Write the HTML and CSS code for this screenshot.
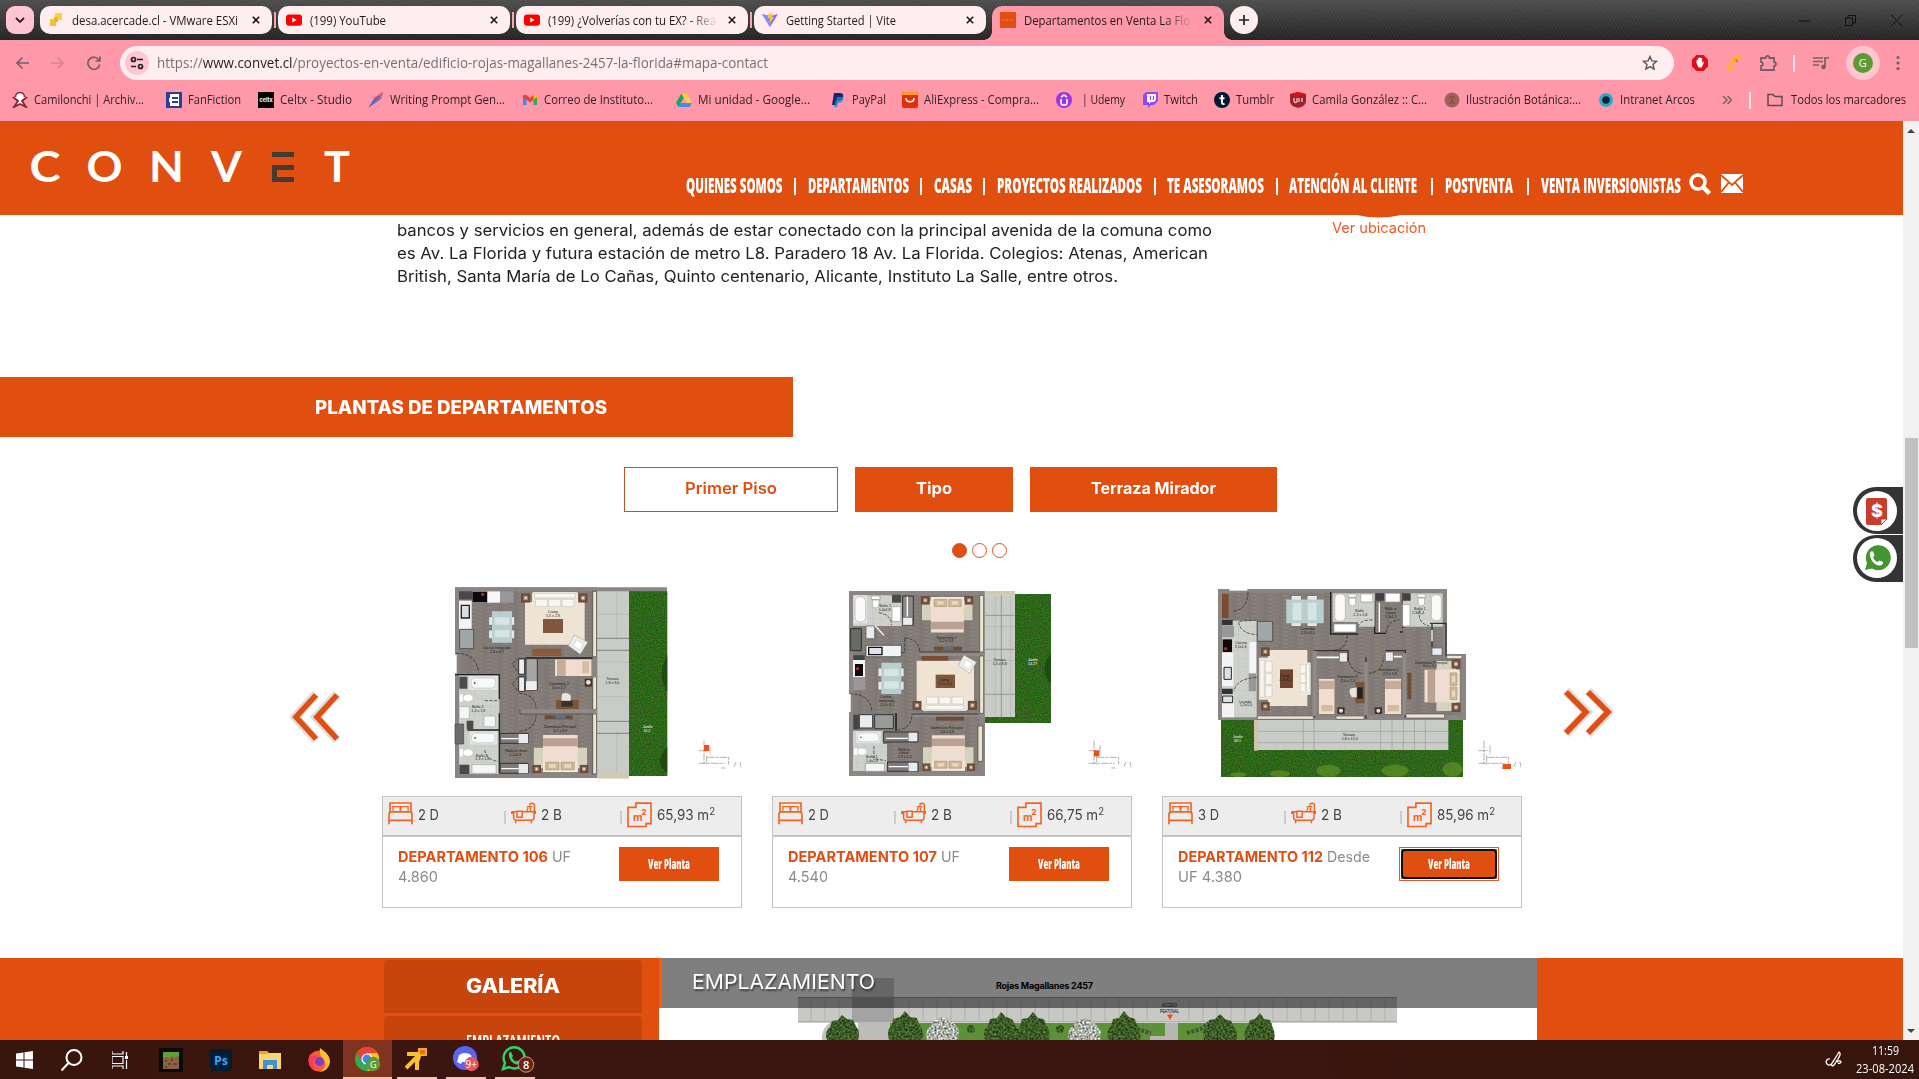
FILE: index.html
```html
<!DOCTYPE html>
<html lang="es">
<head>
<meta charset="utf-8">
<title>Departamentos en Venta La Florida</title>
<link rel="stylesheet" href="styles.css">
</head>
<body>
<svg class="defs" width="0" height="0">
  <defs>
    <filter id="grass" x="0" y="0" width="1" height="1" color-interpolation-filters="sRGB"><feTurbulence type="fractalNoise" baseFrequency=".28" numOctaves="2" seed="4"/><feColorMatrix values=".22 0 0 0 .07  0 .4 0 0 .2  0 0 .2 0 0  0 0 0 0 1"/><feComposite in2="SourceGraphic" operator="in"/></filter>
    <filter id="leaf" x="0" y="0" width="1" height="1" color-interpolation-filters="sRGB"><feTurbulence type="fractalNoise" baseFrequency=".45" numOctaves="2" seed="7"/><feColorMatrix values=".55 0 0 0 -.04  .6 0 0 0 .06  .4 0 0 0 -.05  0 0 0 0 1"/><feComposite in2="SourceGraphic" operator="in"/></filter>
    <filter id="bloom" x="0" y="0" width="1" height="1" color-interpolation-filters="sRGB"><feTurbulence type="fractalNoise" baseFrequency=".5" numOctaves="2" seed="9"/><feColorMatrix values="1.3 0 0 0 .02  1.3 0 0 0 .04  1.3 0 0 0 0  0 0 0 0 1"/><feComposite in2="SourceGraphic" operator="in"/></filter>
    <pattern id="wood" width="46" height="12" patternUnits="userSpaceOnUse"><rect width="46" height="12" fill="#847d78"/><path d="M0 3h30M16 9h30" stroke="#77706b" stroke-width="2"/><path d="M30 6h16M0 0h20" stroke="#928b85" stroke-width="2"/></pattern>
    <pattern id="tile" width="24" height="24" patternUnits="userSpaceOnUse"><rect width="24" height="24" fill="#cfd1cc"/><path d="M0 0h24M0 0v24" stroke="#bcbeb9" stroke-width="1.5"/></pattern>
    <symbol id="bed" viewBox="0 0 160 112"><path d="M0 12h160v62H0z" fill="#d4d2bd"/><path d="M28 0h104v112H28z" fill="#efddd1"/><path d="M28 0h104v32H28z" fill="#f3e6da"/><path d="M28 78h104v24H28z" fill="#bba191"/><path d="M38 8h40v22H38zM84 8h40v22H84z" fill="#cfb896" stroke="#a89272" stroke-width="2"/><path d="M48 14h20v10H48zM94 14h20v10H94z" fill="#e8d9c0"/></symbol>
    <symbol id="single" viewBox="0 0 110 50"><path d="M0 0h110v50H0z" fill="#f0ddd0"/><path d="M6 0h26v50H6z" fill="#c7ab99"/><path d="M82 6h20v36H82z" fill="#d3bd9c"/></symbol>
    <symbol id="sofa" viewBox="0 0 138 48"><rect width="138" height="48" rx="5" fill="#ece8de"/><path d="M8 4h122v14H8zM10 22h36v22H10zM50 22h36v22H50zM90 22h36v22H90z" fill="#f8f6ef" stroke="#cbc5b8" stroke-width="2"/></symbol>
    <symbol id="lamp" viewBox="0 0 30 30"><path d="M0 0h30v30H0z" fill="#6b4d3c"/><path d="M8 8h14v14H8z" fill="#b18b72"/><circle cx="15" cy="15" r="4" fill="#ead9c8"/></symbol>
    <symbol id="dining" viewBox="0 0 82 98"><path d="M2 18h20v26H2zM2 58h20v26H2zM60 18h20v26H60zM60 58h20v26H60z" fill="#e8e9e6" stroke="#656260" stroke-width="2"/><path d="M12 2h60v94H12z" fill="#b9cfce"/><path d="M20 20h44v22H20zM20 58h44v22H20z" fill="#d6e4e3"/></symbol>
    <symbol id="tub" viewBox="0 0 90 44"><rect width="90" height="44" fill="#e3e5e6"/><rect x="6" y="6" width="78" height="32" rx="12" fill="#f8f9f9" stroke="#b9bcbe" stroke-width="2"/><circle cx="18" cy="22" r="3" fill="#555"/></symbol>
    <symbol id="toilet" viewBox="0 0 42 28"><path d="M0 2h12v24H0z" fill="#fff" stroke="#aaa"/><ellipse cx="26" cy="14" rx="15" ry="11" fill="#fff" stroke="#aaa"/></symbol>
    <symbol id="chair" viewBox="0 0 62 62"><path d="M20 2L60 24 38 60 2 34z" fill="#efefec" stroke="#a9a7a3" stroke-width="2"/><path d="M26 16l22 12-12 20-20-14z" fill="#fff" stroke="#c4c2be" stroke-width="2"/></symbol>
    <symbol id="i-bed" viewBox="0 0 76 70"><g fill="none" stroke="#f26322" stroke-width="5"><path d="M6 32V3h64v29M3 68V38c0-6 3-8 7-8h56c4 0 7 2 7 8v30M3 56h70"/><path d="M15 27V14h22v13M39 27V14h22v13" stroke-width="4"/></g></symbol>
    <symbol id="i-bath" viewBox="0 0 76 66"><g fill="none" stroke="#f26322" stroke-width="4.500"><path d="M2 29h16M36 29h38v5h-4v13c0 6-4 8-8 8H16c-5 0-8-2-8-8V34H2v-5"/><path d="M18 28h16v18H18z"/><path d="M14 56v8M62 56v8M71 29V10c0-9-14-9-14 0"/><path d="M48 14h17M52 18l-4 9M59 18v9" stroke-width="4"/></g></symbol>
    <symbol id="i-m2" viewBox="0 0 76 78"><path d="M27 3h46v62H58v9H3V16h24z" fill="none" stroke="#f26322" stroke-width="5"/><text x="18" y="56" font-family="Inter,sans-serif" font-weight="700" font-size="32" fill="#f26322">m</text><text x="44" y="38" font-family="Inter,sans-serif" font-weight="800" font-size="24" fill="#f26322">2</text></symbol>
    <symbol id="map" viewBox="0 0 130 100"><path d="M18 12v70M36 26v28M26 56v28M2 42h28M2 80h78M28 62h64v22M70 94h12M108 90l6-14M126 76l4 18" stroke="#8c8c8c" stroke-width="2" fill="none" stroke-dasharray="22 3 9 3"/></symbol>
    <symbol id="close" viewBox="0 0 8 8"><path d="M.8.8l6.4 6.4M7.2.8L.8 7.2" stroke="#1c1416" stroke-width="1.6"/></symbol>
    <symbol id="yt" viewBox="0 0 16 16"><rect y="2.4" width="16" height="11.4" rx="3" fill="#f00"/><path d="M6.3 5.5v5l4.3-2.5z" fill="#fff"/></symbol>
  </defs>
</svg>

<div class="tabstrip">
  <div class="tab-search"><svg width="10" height="6" viewBox="0 0 10 6"><path d="M1 1l4 4 4-4" fill="none" stroke="#222" stroke-width="1.8"/></svg></div>
  <div class="tab"><svg width="16" height="16"><path d="M7 1h7v7H7z" fill="#fbd234"/><path d="M2 7h6v7H2z" fill="#f8c420"/><path d="M6 5h4v5H6z" fill="#f3b416"/></svg><span data-w="166">desa.acercade.cl - VMware ESXi</span><svg class="x" width="8" height="8"><use href="#close"/></svg></div>
  <div class="tab"><svg width="16" height="16"><use href="#yt"/></svg><span data-w="76">(199) YouTube</span><svg class="x" width="8" height="8"><use href="#close"/></svg></div>
  <div class="tab"><svg width="16" height="16"><use href="#yt"/></svg><span class="fade" data-w="168">(199) ¿Volverías con tu EX? - Rea</span><svg class="x" width="8" height="8"><use href="#close"/></svg></div>
  <div class="tab last"><svg width="16" height="16"><path d="M0 2l8 13L16 2 8 4z" fill="#8a6cf0"/><path d="M0 2l8 13 1-10z" fill="#7a94fa"/><path d="M6 2l5-1-1 4h2l-4 6V6H6z" fill="#ffc92e"/></svg><span data-w="110">Getting Started | Vite</span><svg class="x" width="8" height="8"><use href="#close"/></svg></div>
  <div class="tab active"><svg width="16" height="16"><path d="M0 0h16v16H0z" fill="#e04e10"/><path d="M2 8h12" stroke="#f4a27c" stroke-dasharray="1 1.6"/></svg><span class="fade" data-w="166">Departamentos en Venta La Flo</span><svg class="x" width="8" height="8"><use href="#close"/></svg></div>
  <div class="newtab"><svg width="10" height="10"><path d="M5 0v10M0 5h10" stroke="#222" stroke-width="1.7"/></svg></div>
  <div class="winbtns">
    <svg width="11" height="11"><path d="M0 6h11" stroke="#111"/></svg>
    <svg width="11" height="11"><path d="M.5 3h7v7.500h-7zM3 3V.5h7.500V8H8" fill="none" stroke="#111"/></svg>
    <svg width="11" height="11"><path d="M0 0l11 11M11 0L0 11" stroke="#111"/></svg>
  </div>
</div>

<div class="toolbar">
  <div class="navbtns">
    <svg width="14" height="14"><path d="M14 7H2M7.500 1.500L2 7l5.500 5.500" fill="none" stroke="#75606a" stroke-width="1.7"/></svg>
    <svg width="14" height="14"><path d="M0 7h12M6.500 1.500L12 7l-5.500 5.500" fill="none" stroke="#d28492" stroke-width="1.7"/></svg>
    <svg width="14" height="14"><path d="M12 4A6 6 0 1 0 12.800 8.500M13 .5V5H8.500" fill="none" stroke="#75606a" stroke-width="1.7"/></svg>
  </div>
  <div class="omnibox">
    <div class="site"><svg width="14" height="14"><g fill="none" stroke="#2a2024" stroke-width="1.7"><circle cx="3.500" cy="3.500" r="2"/><path d="M7 3.500h6M1 10.500h5"/><circle cx="10.500" cy="10.500" r="2"/></g></svg></div>
    <span class="url" data-w="611">https://<b>www.convet.cl</b>/proyectos-en-venta/edificio-rojas-magallanes-2457-la-florida#mapa-contact</span>
    <svg class="star" width="16" height="16"><path d="M8 1.500l1.900 4.400 4.700.4-3.600 3.100 1.100 4.700L8 11.600l-4.100 2.500L5 9.400 1.400 6.300l4.700-.4z" fill="none" stroke="#5d5358" stroke-width="1.400"/></svg>
  </div>
  <div class="exts">
    <svg width="18" height="18"><path d="M5.500 1h7L17 5.500v7L12.500 17h-7L1 12.500v-7z" fill="#e00e17"/><path d="M5.500 9V6h1.300V4h1.400V3.400h1.500V4h1.400v5l1-1.500 1 .6-2.300 5.400H7.500z" fill="#fff"/></svg>
    <svg width="18" height="18"><path d="M3 17V13l4-7V3l3-1h6v4h-3l-2 0-2 4-2 2v5z" fill="#fbb034"/><path d="M10 5l3 1-1 3z" fill="#c47b30"/></svg>
    <svg width="18" height="18"><path d="M2 4h4.500a2 2 0 1 1 4 0H15v4a2 2 0 1 1 0 4v4H2v-4a2 2 0 1 0 0-4z" fill="none" stroke="#75606a" stroke-width="1.800"/></svg>
    <i class="vsep"></i>
    <svg width="18" height="18"><path d="M1 4h10M1 7.500h10M1 11h6M13 13V4h4" fill="none" stroke="#75606a" stroke-width="1.700"/><circle cx="11.500" cy="13" r="2.300" fill="#75606a"/></svg>
    <div class="avatar"><span>G</span></div>
    <svg width="4" height="16"><g fill="#75606a"><circle cx="2" cy="2.500" r="1.600"/><circle cx="2" cy="8" r="1.600"/><circle cx="2" cy="13.500" r="1.600"/></g></svg>
  </div>
</div>

<div class="bookmarks">
  <div><svg width="16" height="16"><circle cx="8" cy="5" r="4.500" fill="#fff" stroke="#8d2230" stroke-width="1.500"/><path d="M1 5l5 4-4 6 6-3 6 3-4-6 5-4" fill="#fff" stroke="#8d2230" stroke-width="1.800"/></svg><span data-w="110">Camilonchi | Archiv...</span></div>
  <div><svg width="16" height="16"><path d="M0 0h16v16H0z" fill="#2c3e9c"/><path d="M4 2h9v12H4zM3 6h2v4H3z" fill="#fff"/><path d="M6 5h6v2H6zM6 9h6v2H6z" fill="#2c3e9c"/></svg><span data-w="53">FanFiction</span></div>
  <div><svg width="16" height="16"><path d="M0 0h16v16H0z"/><text x="1.500" y="10" font-family="Inter,sans-serif" font-size="5.500" font-weight="700" fill="#fff">celtx</text></svg><span data-w="72">Celtx - Studio</span></div>
  <div><svg width="16" height="16"><path d="M1 15L6 6l9-6-2 7-7 5z" fill="#4f7fd0"/><path d="M6 6l9-6-3 6-5 3z" fill="#e8505f"/><path d="M1 15L11 4" stroke="#6b3fa0"/></svg><span data-w="115">Writing Prompt Gen...</span></div>
  <div><svg width="16" height="16"><path d="M1 3h3.500v10H1z" fill="#4285f4"/><path d="M11.500 3H15v10h-3.500z" fill="#34a853"/><path d="M1 3l3.500 0L8 6l3.500-3H15v2L8 10.500 1 5z" fill="#ea4335"/><path d="M11.500 3H15v2.500l-3.500 2z" fill="#fbbc04"/></svg><span data-w="109">Correo de Instituto...</span></div>
  <div><svg width="16" height="16"><path d="M5.500 1.500L0 11l2.500 4L8 5.500z" fill="#1ea362"/><path d="M5.500 1.500h5L16 11h-5z" fill="#ffcf48"/><path d="M5 11h11l-2.500 4h-11z" fill="#4688f4"/></svg><span data-w="112">Mi unidad - Google...</span></div>
  <div><svg width="16" height="16"><path d="M4 1h6c4 0 4 4 2 6s-4 2-5 2l-1 4H2z" fill="#14296b"/><path d="M7 5h6c1 3-1 6-5 6l-1 4H4z" fill="#1b83d0" opacity=".8"/></svg><span class="pp" data-w="34">PayPal</span></div>
  <div><svg width="16" height="16"><rect width="16" height="16" rx="2" fill="#e62e04"/><path d="M0 3V2a2 2 0 0 1 2-2h12a2 2 0 0 1 2 2v1z" fill="#ff9a1c"/><path d="M4 6c0 5 8 5 8 0" fill="none" stroke="#fff" stroke-width="1.600"/></svg><span data-w="115">AliExpress - Compra...</span></div>
  <div><svg width="16" height="16"><circle cx="8" cy="8" r="8" fill="#9a35e8"/><path d="M5 7v4c0 3 6 3 6 0V7M5 5l3-2 3 2" fill="none" stroke="#fff" stroke-width="1.600"/></svg><span class="ud" data-w="43">| Udemy</span></div>
  <div><svg width="16" height="16"><path d="M1 3l3-3h12v9l-4 4H9l-3 3v-3H1z" fill="#9146ff"/><path d="M5 2h9v6l-2 2H9l-2 2v-2H5z" fill="#fff"/><path d="M8.500 4v4M11.500 4v4" stroke="#9146ff" stroke-width="1.300"/></svg><span data-w="34">Twitch</span></div>
  <div><svg width="16" height="16"><circle cx="8" cy="8" r="8" fill="#001935"/><path d="M8 3v7.500c0 1.500 1 1.800 2.500 1.300M5.500 6.200h5" fill="none" stroke="#fff" stroke-width="2"/></svg><span data-w="38">Tumblr</span></div>
  <div><svg width="16" height="16"><path d="M0 2l8-2 8 2v7c0 4-4 6-8 7-4-1-8-3-8-7z" fill="#9c2230"/><path d="M4 6v3c0 2 3 2 3 0V6M9 6v4M12 6v4" stroke="#f2c6c8" fill="none" stroke-width="1.300"/><path d="M1 2l7-2 7 2-7 3z" fill="#e01010"/></svg><span data-w="115">Camila González :: C...</span></div>
  <div><svg width="16" height="16"><circle cx="8" cy="8" r="7.500" fill="#a3605a"/><path d="M5 6c1-2 5-2 6 0M8 6v4M5 11h6" stroke="#7f4440" fill="none"/></svg><span data-w="115">Ilustración Botánica:...</span></div>
  <div><svg width="16" height="16"><circle cx="8" cy="8" r="7" fill="#2fa9c9"/><circle cx="8" cy="8" r="3.800" fill="#0d2232"/></svg><span data-w="75">Intranet Arcos</span></div>
  <svg class="more" width="10" height="8"><path d="M1 0l4 4-4 4M5.500 0l4 4-4 4" fill="none" stroke="#75606a" stroke-width="1.500"/></svg>
  <i class="vsep"></i>
  <div><svg width="16" height="16"><path d="M1 2.500h5l2 2h7v9H1z" fill="none" stroke="#5c4a50" stroke-width="1.500"/></svg><span class="all" data-w="115">Todos los marcadores</span></div>
</div>

<div class="viewport">
  <main class="page">
    <header class="site-header">
      <svg class="logo" width="330" height="56" viewBox="27 139 330 56" font-family="Lato,sans-serif" font-size="42" font-weight="700" fill="#fff">
        <text x="28.500" y="182" textLength="31" lengthAdjust="spacingAndGlyphs">C</text><text x="85.500" y="182" textLength="36" lengthAdjust="spacingAndGlyphs">O</text><text x="148" y="182" textLength="35" lengthAdjust="spacingAndGlyphs">N</text><text x="210" y="182" textLength="31" lengthAdjust="spacingAndGlyphs">V</text>
        <g fill="#463a34"><rect x="271" y="152" width="22" height="5"/><path d="M271 165h22v5h-17v7h17v5h-22z"/></g>
        <text x="323" y="182" textLength="26" lengthAdjust="spacingAndGlyphs">T</text>
      </svg>
      <nav>
        <a data-w="96.5">QUIENES SOMOS</a><i></i><a data-w="101">DEPARTAMENTOS</a><i></i><a data-w="38">CASAS</a><i></i><a data-w="145">PROYECTOS REALIZADOS</a><i></i><a data-w="97">TE ASESORAMOS</a><i></i><a data-w="128">ATENCIÓN AL CLIENTE</a><i class="wide"></i><a data-w="68">POSTVENTA</a><i class="wide"></i><a data-w="140">VENTA INVERSIONISTAS</a>
        <svg class="lens" width="22" height="22"><circle cx="9" cy="9" r="7" fill="none" stroke="#fff" stroke-width="3.500"/><path d="M14 14l6.500 6.500" stroke="#fff" stroke-width="4.500"/></svg>
        <svg class="mail" width="22" height="19"><path d="M0 0h22v19H0z" fill="#fff"/><path d="M0 1l11 10L22 1M0 18l7.500-9M22 18l-7.500-9" fill="none" stroke="#e04e10" stroke-width="1.800"/></svg>
      </nav>
    </header>

    <section class="intro">
      <p><span data-w="815">bancos y servicios en general, además de estar conectado con la principal avenida de la comuna como</span><span data-w="811">es Av. La Florida y futura estación de metro L8. Paradero 18 Av. La Florida. Colegios: Atenas, American</span><span data-w="721">British, Santa María de Lo Cañas, Quinto centenario, Alicante, Instituto La Salle, entre otros.</span></p>
      <div class="where"><svg width="44" height="3"><path d="M0 0q22 5 44 0z" fill="#e04e10"/></svg><a data-w="94">Ver ubicación</a></div>
    </section>

    <h2 class="banner"><span data-w="292">PLANTAS DE DEPARTAMENTOS</span></h2>

    <div class="floors">
      <a class="on"><span data-w="92">Primer Piso</span></a><a class="f2"><span data-w="36">Tipo</span></a><a class="f3"><span data-w="125">Terraza Mirador</span></a>
    </div>
    <div class="dots"><i class="on"></i><i></i><i></i></div>

    <div class="carousel">
      <svg class="prev" width="50" height="52"><g fill="none" stroke="#ddd" stroke-width="9"><path d="M26 3L5 26l21 23M47 3L26 26l21 23"/></g><g fill="none" stroke="#e04e10" stroke-width="5.500"><path d="M26 4L6 26l20 22M47 4L27 26l20 22"/></g></svg>

      <article class="card">
        <svg class="plan" width="360" height="210" viewBox="36 30 1080 630">
          <path d="M255 52h636v14H255z" fill="#8b8583"/><path d="M255 52h426v572H255z" fill="#8b8583"/>
          <path d="M267 64h403v546H267z" fill="url(#wood)"/>
          <path d="M681 64h96v548h-96z" fill="#c9cbc7"/><path d="M681 612h96v14h-96z" fill="#cfcbb2"/>
          <path d="M681 133h96M681 205h96M681 241h96M681 454h96M681 490h96M740 64v140M740 490v120M681 276h96M681 380h96" stroke="#b4b6b2" stroke-width="2"/>
          <path d="M681 205h96M681 241h96M681 454h96M681 490h96" stroke="#666" stroke-width="2"/>
          <path d="M777 64h115v554H777z" filter="url(#grass)"/><path d="M892 255v110q-34-50 0-110zM892 530v80q-44-35 0-80z" fill="#123a0a" opacity=".6"/>
          <path d="M267 64h40v24h-40z" fill="#4a484a"/><path d="M308 66h44v30h-44z" fill="#0c0a0c"/><path d="M352 64h38v34h-38z" fill="#f7f7f8"/><path d="M390 64h40v34h-40z" fill="#98989b"/><circle cx="338" cy="73" r="5" fill="#c22"/>
          <path d="M267 92h38v86h-38z" fill="#f4f4f5"/><path d="M274 106h24v38h-24z" fill="#ddd" stroke="#222" stroke-width="4"/><path d="M269 178h42v58h-42z" fill="#a0a5a5" stroke="#555" stroke-width="3"/>
          <use href="#dining" x="354" y="122" width="82" height="98"/>
          <path d="M465 96h179v128H465z" fill="#efe3d3"/><use href="#sofa" x="486" y="66" width="138" height="48"/><path d="M519 147h60v42h-60z" fill="#80563d"/><use href="#lamp" x="453" y="70" width="28" height="28"/><use href="#lamp" x="625" y="70" width="28" height="28"/><use href="#chair" x="593" y="193" width="62" height="62"/><path d="M487 236h87v22h-87z" fill="#8c5b3a"/>
          <path d="M668 64h12v196h-12zM668 320h12v98h-12zM668 432h12v180h-12z" fill="#ece5d2" stroke="#333" stroke-width="2"/><path d="M666 260h16v62h-16z" fill="#8b8583"/>
          <path d="M466 264h202" stroke="#222" stroke-width="4"/><path d="M446 266h18v48h-18zM446 320h18v44h-18zM468 266h34v94h-34z" fill="#a9a5a3" stroke="#333" stroke-width="3"/><path d="M468 334h32v26h-32zM448 270h14v40h-14zM448 324h14v38h-14z" fill="#eceef0"/>
          <use href="#single" x="555" y="268" width="110" height="50"/><path d="M644 326h22v24h-22z" fill="#4c342d"/><circle cx="655" cy="337" r="7" fill="#f4dada"/>
          <path d="M558 390h68v28h-68z" fill="#7a5638"/><path d="M574 392h34v18h-34z" fill="#333"/><path d="M576 372q14-8 26 4v16h-28z" fill="#e8e5dd"/>
          <path d="M450 418h232v14H450z" fill="#908a89"/><path d="M450 418v14M450 432h220" stroke="#444" stroke-width="2"/><path d="M524 436h84v12h-84z" fill="#6e4d38"/><path d="M556 434h30v12h-30z" fill="#5b7180"/>
          <path d="M267 316h121v295H267z" fill="url(#tile)"/><path d="M255 314h133v74M388 430v50H292M388 480v130" fill="none" stroke="#222" stroke-width="4"/>
          <path d="M268 320h24v36h-24zM268 584h30v28h-30zM290 452h20v26h-20z" fill="#4a4a4c"/><use href="#tub" x="296" y="318" width="88" height="42"/><use href="#tub" x="296" y="484" width="88" height="40"/><use href="#toilet" x="268" y="370" width="42" height="28"/><use href="#toilet" x="268" y="534" width="42" height="28"/><path d="M268 410h30v36h-30zM342 438h34v32h-34zM306 584h72v26h-72z" fill="#f5f6f6" stroke="#aaa" stroke-width="2"/><path d="M255 462h26v60h-26z" fill="#6c6c6b" stroke="#444" stroke-width="2"/>
          <path d="M390 490h84v30h-84zM390 580h84v30h-84z" fill="#7f7977" stroke="#333" stroke-width="3"/><path d="M394 506h52M394 596h52" stroke="#fff" stroke-width="4"/><path d="M446 492h28v28h-28zM446 582h28v28h-28z" fill="#e8ebed"/>
          <use href="#bed" x="491" y="495" width="160" height="112" transform="rotate(180 571 551)"/><use href="#lamp" x="486" y="584" width="28" height="26"/><use href="#lamp" x="628" y="584" width="28" height="26"/>
          <path d="M258 250q60-2 68 58M448 370q50 4 50 46M448 484q50-6 50-50M344 392h40M344 540q6 30 40 34M428 280l16-14M428 284l16 22M428 340l16-18M428 342l16 22" fill="none" stroke="#222" stroke-width="2" stroke-dasharray="10 4"/><path d="M250 254h10v56h-10z" fill="#fff"/>
          <g class="lbl"><text x="535" y="129">Living</text><text x="528" y="140">5,5 x 2,8</text><text x="338" y="238">Cocina Integrada</text><text x="360" y="249">2,4 x 4,7</text><text x="537" y="345">Dormitorio 2</text><text x="545" y="356">3,0 x 2,7</text><text x="522" y="474">Dormitorio Principal</text><text x="550" y="486">3,7 x 3,6</text><text x="306" y="414">Baño 2</text><text x="304" y="425">1,4 x 1,8</text><text x="405" y="547">Walk in closet</text><text x="418" y="558">2,1x1,8</text><text x="318" y="560">Baño 1</text><text x="316" y="571">1,4 x 1,8</text><text x="709" y="330">Terraza</text><text x="706" y="341">1,8 x 9,0</text><g fill="#fff"><text x="818" y="474">Jardín</text><text x="820" y="485">16,2</text></g></g>
          <use href="#map" x="984" y="500" width="130" height="100"/><path d="M1002 525h15v18h-15z" fill="#f04e16"/>
        </svg>
        <div class="specs"><svg width="25" height="23"><use href="#i-bed"/></svg><span data-w="21">2 D</span><i></i><svg class="bath" width="25" height="22"><use href="#i-bath"/></svg><span data-w="21">2 B</span><i></i><svg width="25" height="26"><use href="#i-m2"/></svg><span data-w="58">65,93 m<sup>2</sup></span></div>
        <div class="info"><p><b data-w="150">DEPARTAMENTO 106</b> <span data-w="19">UF</span><br><span data-w="40">4.860</span></p><a class="btn"><span data-w="42">Ver Planta</span></a></div>
      </article>

      <article class="card">
        <svg class="plan" width="360" height="210" viewBox="36 30 1080 630">
          <path d="M764 72h109v387H674v-20h90z" filter="url(#grass)"/><path d="M873 250v90q-40-40 0-90z" fill="#123a0a" opacity=".6"/>
          <path d="M267 63h408v555H267z" fill="#8b8583"/><path d="M279 76h380v528H279z" fill="url(#wood)"/>
          <path d="M674 76h91v365h-91z" fill="#c9cbc7"/><path d="M674 63h91v13h-91z" fill="#cfcbb2"/><path d="M706 76v365M724 76v365M674 136h90M674 170h90M674 238h90M674 272h90M674 373h90M752 76v365" stroke="#b2b4b0" stroke-width="2"/><path d="M674 136h90M674 238h90M674 373h90M724 76v365" stroke="#777" stroke-width="1.500"/>
          <path d="M279 76h146v92H279z" fill="url(#tile)"/><rect x="281" y="76" width="40" height="84" fill="#e4e6e6"/><rect x="285" y="80" width="32" height="76" rx="14" fill="#fafafa" stroke="#aaa" stroke-width="2"/><path d="M334 78h26v10h-26zM337 90h20v18q-10 12-20 0zM396 110h26v44h-26z" fill="#fff" stroke="#999" stroke-width="2"/><path d="M396 74h28v24h-28z" fill="#4a4a4c"/>
          <path d="M428 78h32v88h-32z" fill="#8e8986" stroke="#333" stroke-width="3"/><path d="M442 80v60" stroke="#fff" stroke-width="4"/><path d="M428 142h30v24h-30zM318 168h26v38h-26z" fill="#e9ebed" stroke="#555" stroke-width="2"/><path d="M272 176h32v66h-32z" fill="#686a68" stroke="#333" stroke-width="3"/>
          <use href="#bed" x="486" y="78" width="152" height="112"/><use href="#lamp" x="482" y="78" width="28" height="26"/><use href="#lamp" x="613" y="78" width="28" height="26"/><path d="M522 230h84v12h-84z" fill="#6e4d38"/><path d="M550 230h30v10h-30z" fill="#5b7180"/>
          <path d="M478 244h197v14H478zM456 428h218v12H456z" fill="#908a89"/><path d="M456 432h200M478 246h180" stroke="#333" stroke-width="3"/>
          <path d="M318 226h106v34H318z" fill="#f2f3f6" stroke="#333" stroke-width="2"/><path d="M326 232h40v22h-40z" fill="#dfe2e8" stroke="#111" stroke-width="4"/><path d="M280 256h34v14h-34zM280 434h16v44h-16zM279 580h34v24h-34z" fill="#434244"/><path d="M279 270h36v52h-36z" fill="#f4f4f5"/><path d="M285 282h24v36h-24z" fill="#0c0a0c"/><circle cx="293" cy="296" r="5" fill="#c22"/><path d="M280 322h36v38h-36z" fill="#98989b"/>
          <use href="#dining" x="352" y="276" width="82" height="98"/><path d="M470 272h172v148H470z" fill="#efe3d3"/><path d="M485 258h80v14h-80z" fill="#7a4d31"/><path d="M527 314h58v40h-58z" fill="#80563d"/><use href="#chair" x="591" y="254" width="62" height="58"/><use href="#sofa" x="487" y="377" width="134" height="46" transform="rotate(180 554 400)"/><use href="#lamp" x="457" y="392" width="28" height="28"/><use href="#lamp" x="623" y="392" width="28" height="28"/>
          <path d="M659 76h12v170h-12zM659 258h12v172h-12zM654 468h14v106h-14z" fill="#ece5d2" stroke="#444" stroke-width="2"/>
          <path d="M298 434h40v40h-40z" fill="#e9ebed" stroke="#333" stroke-width="3"/><path d="M344 434h56v42h-56z" fill="#979c9b" stroke="#333" stroke-width="3"/><path d="M408 430v52" stroke="#222" stroke-width="5"/>
          <path d="M279 482h90v40h12v82H279z" fill="url(#tile)"/><use href="#tub" x="281" y="484" width="88" height="36"/><use href="#toilet" x="281" y="532" width="40" height="26"/><path d="M316 580h58v24h-58z" fill="#f5f6f6" stroke="#888" stroke-width="2"/><path d="M370 486h104v30H370zM382 576h92v28h-92z" fill="#7f7977" stroke="#333" stroke-width="3"/><path d="M378 505h66M386 590h58" stroke="#fff" stroke-width="4"/><path d="M446 488h26v26h-26zM446 578h26v26h-26z" fill="#e8ebed"/>
          <path d="M528 440h84v12h-84z" fill="#6e4d38"/><use href="#bed" x="489" y="494" width="152" height="110" transform="rotate(180 565 549)"/><use href="#lamp" x="485" y="580" width="28" height="24"/><use href="#lamp" x="619" y="580" width="28" height="24"/>
          <path d="M268 372q62-2 68 52M434 204q46 4 44 44M412 480q44-4 44-48M424 248h10v-44M356 128q40 6 38 38M342 528v38l36 6" fill="none" stroke="#222" stroke-width="2" stroke-dasharray="10 4"/><path d="M346 168l26 28" stroke="#fff" stroke-width="4"/><path d="M262 372h10v54h-10z" fill="#fff"/>
          <g class="lbl"><text x="530" y="206">Dormitorio 2</text><text x="538" y="217">3,2 x 1,4</text><text x="360" y="385">Cocina</text><text x="357" y="396">Integrada</text><text x="360" y="407">2,0 x 4,2</text><text x="538" y="333">Living</text><text x="535" y="345">3,2 x 2,6</text><text x="512" y="476">Dormitorio Principal</text><text x="540" y="488">3,0 x 2,9</text><text x="414" y="542">Walk in</text><text x="417" y="553">closet</text><text x="413" y="565">1,3 x 1,5</text><text x="358" y="112">Baño 2</text><text x="356" y="123">1,4x1,8</text><text x="318" y="564">Baño 1</text><text x="318" y="575">1,4x1,8</text><text x="700" y="272">Terraza</text><text x="698" y="284">1,5 x 8,8</text><g fill="#fff"><text x="803" y="272">Jardín</text><text x="804" y="284">14,27</text></g></g>
          <use href="#map" x="984" y="500" width="130" height="100"/><path d="M1002 541h16v18h-16z" fill="#f04e16"/>
        </svg>
        <div class="specs"><svg width="25" height="23"><use href="#i-bed"/></svg><span data-w="21">2 D</span><i></i><svg class="bath" width="25" height="22"><use href="#i-bath"/></svg><span data-w="21">2 B</span><i></i><svg width="25" height="26"><use href="#i-m2"/></svg><span data-w="57">66,75 m<sup>2</sup></span></div>
        <div class="info"><p><b data-w="149">DEPARTAMENTO 107</b> <span data-w="19">UF</span><br><span data-w="40">4.540</span></p><a class="btn"><span data-w="42">Ver Planta</span></a></div>
      </article>

      <article class="card">
        <svg class="plan" width="360" height="210" viewBox="36 30 1080 630">
          <path d="M213 448h726v173H213z" filter="url(#grass)"/><g fill="#6f9e2c" opacity=".55"><ellipse cx="390" cy="611" rx="30" ry="10"/><ellipse cx="535" cy="602" rx="36" ry="18"/><ellipse cx="735" cy="602" rx="40" ry="18"/><ellipse cx="908" cy="598" rx="30" ry="22"/><ellipse cx="265" cy="614" rx="24" ry="7"/></g>
          <path d="M204 57h687v195h57v198H204z" fill="#8b8583"/><path d="M216 68h662v196h56v172H216z" fill="url(#wood)"/>
          <path d="M312 450h583v90H312z" fill="#c9cbc7"/><path d="M322 484h573M322 518h573M492 450v90M692 450v90M726 450v90M760 450v90M793 450v90M826 450v90M460 450v90" stroke="#8a8a88" stroke-width="1.500"/><path d="M312 450h12v92h-12z" fill="#d0c4a2"/>
          <path d="M216 152h104v290H216z" fill="url(#tile)"/><path d="M216 72h20v72h-20z" fill="#7a4d31"/><path d="M216 150h32v16h-32zM216 356h32v16h-32z" fill="#333"/><path d="M216 168h36v34h-36zM296 310h22v54h-22z" fill="#98989b"/><path d="M218 208h28v38h-28z" fill="#0c0a0c"/><circle cx="227" cy="236" r="5" fill="#c22"/><path d="M216 248h34v100h-34zM216 376h36v66h-36zM298 216h20v94h-20z" fill="#f4f4f6"/><path d="M222 292h22v36h-22zM218 378h30v20h-30z" fill="#dde1e6" stroke="#222" stroke-width="3"/><path d="M322 154h46v60h-46z" fill="#a0a8a7" stroke="#555" stroke-width="3"/>
          <use href="#dining" x="416" y="64" width="98" height="118" transform="rotate(90 465 123)"/>
          <path d="M354 240h118v168H354z" fill="#efe3d3"/><use href="#sofa" x="284" y="304" width="128" height="44" transform="rotate(-90 348 326)"/><use href="#sofa" x="416" y="304" width="98" height="44" transform="rotate(90 465 326)"/><path d="M390 298h39v56h-39z" fill="#6e4530"/><use href="#lamp" x="332" y="232" width="28" height="26"/><use href="#lamp" x="332" y="396" width="28" height="26"/>
          <path d="M542 66v126h82M674 92v98h34M758 68v106M758 186h-8" stroke="#222" stroke-width="4" fill="none"/><path d="M548 70h126v100h-50v-14h-76zM758 70h120v100H758z" fill="url(#tile)"/><rect x="554" y="72" width="32" height="82" rx="12" fill="#fafafa" stroke="#aaa" stroke-width="2"/><rect x="844" y="74" width="30" height="78" rx="12" fill="#fafafa" stroke="#aaa" stroke-width="2"/><path d="M595 72h24v10h-24zM597 84h20v18q-10 12-20 0zM802 72h24v10h-24zM804 84h20v18q-10 12-20 0zM632 72h36v24h-36zM758 104h22v64h-22zM552 162h66v24h-66zM706 70h44v26h-44z" fill="#fff" stroke="#999" stroke-width="2"/><path d="M676 70h26v22h-26zM758 70h24v22h-24z" fill="#403f41"/><path d="M688 98v88" stroke="#fff" stroke-width="4"/>
          <path d="M490 242h104v34M494 242v200M648 262v184M706 242h60v200M840 160h48v100M846 160v72" fill="none" stroke="#333" stroke-width="4"/><path d="M488 242h12v196h-12zM643 276h10v160h-10zM758 250h10v186h-10z" fill="#918b88"/><path d="M500 262h68M714 260h42" stroke="#fff" stroke-width="5"/><path d="M568 248h24v28h-24zM706 246h24v28h-24zM846 234h30v22h-30z" fill="#e8ebed" stroke="#555" stroke-width="2"/><path d="M846 180v34" stroke="#fff" stroke-width="4"/>
          <use href="#single" x="477" y="355" width="106" height="48" transform="rotate(90 530 379)"/><use href="#single" x="676" y="355" width="106" height="48" transform="rotate(90 729 379)"/><path d="M562 412h22v20h-22zM674 412h22v20h-22z" fill="#44302b"/><circle cx="573" cy="422" r="6" fill="#f4dada"/><circle cx="685" cy="422" r="6" fill="#f4dada"/><path d="M616 336h28v64h-28z" fill="#7a5638"/><path d="M622 352h16v34h-16z" fill="#222"/><path d="M600 356q-4 14 6 26h14v-30z" fill="#e8e5dd"/>
          <use href="#bed" x="801" y="292" width="150" height="112" transform="rotate(90 876 348)"/><use href="#lamp" x="904" y="268" width="28" height="28"/><use href="#lamp" x="904" y="398" width="28" height="28"/><path d="M772 308h12v80h-12z" fill="#6e4d38"/>
          <path d="M322 438h168v10H322zM558 438h84v10h-84zM768 432h116v12H768zM890 256h46v10h-46z" fill="#ece5d2" stroke="#555" stroke-width="2"/>
          <path d="M294 66q-2 54-46 58M320 150l-54 4q2 36 54 40M592 196q-4 46-44 44M594 262q8 46 46 48M656 310q44-4 44-48M708 188q4-36 40-38M320 322q-62 4-68 42M808 120q-6 40 30 48M624 170q8-22 44-20" fill="none" stroke="#222" stroke-width="2" stroke-dasharray="10 4"/><path d="M238 52h54v10h-54z" fill="#fff"/>
          <g class="lbl"><text x="450" y="180">Comedor</text><text x="452" y="192">2,3 x 3,5</text><text x="616" y="126">Baño</text><text x="610" y="137">2,3 x 1,8</text><text x="704" y="120">Walk in</text><text x="708" y="131">closet</text><text x="704" y="143">1,3x1,5</text><text x="792" y="120">Baño 1</text><text x="786" y="132">2,3x1,4</text><text x="256" y="222">Cocina</text><text x="254" y="233">3,1x1,6</text><text x="390" y="322">Living</text><text x="388" y="334">4,7x3,2</text><text x="562" y="323">Dormitorio 3</text><text x="572" y="335">2,4 x 2,3</text><text x="686" y="303">Dormitorio 2</text><text x="698" y="314">2,7 x 1,8</text><text x="796" y="281">Dormitorio Principal</text><text x="818" y="292">3,0 x 3,0</text><text x="268" y="398">Lavado</text><text x="270" y="409">1,2x1,0</text><text x="578" y="497">Terraza</text><text x="575" y="509">1,8 x 12,0</text><g fill="#fff"><text x="248" y="505">Jardín</text><text x="252" y="516">49,1</text></g></g>
          <use href="#map" x="984" y="500" width="130" height="100"/><path d="M1058 582h25v15h-25z" fill="#f04e16"/>
        </svg>
        <div class="specs"><svg width="25" height="23"><use href="#i-bed"/></svg><span data-w="21">3 D</span><i></i><svg class="bath" width="25" height="22"><use href="#i-bath"/></svg><span data-w="21">2 B</span><i></i><svg width="25" height="26"><use href="#i-m2"/></svg><span data-w="58">85,96 m<sup>2</sup></span></div>
        <div class="info"><p><b data-w="145">DEPARTAMENTO 112</b> <span data-w="43">Desde</span><br><span data-w="64">UF 4.380</span></p><a class="btn focus"><span data-w="42">Ver Planta</span></a></div>
      </article>

      <svg class="next" width="50" height="52"><g fill="none" stroke="#ddd" stroke-width="9"><path d="M3 4l21 21L3 47M25 4l21 21-21 22"/></g><g fill="none" stroke="#e04e10" stroke-width="5.500"><path d="M3 5l20 20L3 46M25 5l20 20-20 21"/></g></svg>
    </div>

    <section class="gallery">
      <div class="menu"><h3><span data-w="94">GALERÍA</span></h3><a><span data-w="94">EMPLAZAMIENTO</span></a></div>
      <div class="stage">
        <svg width="878" height="82">
          <path d="M139 39.500h599V64H139z" fill="#c8c8c5"/><path d="M139 39.500h599M139 64h599" stroke="#9b9b99"/>
          <path d="M152 40v24M166 40v24M180 40v24M250 40v24M264 40v24M278 40v24M292 40v24M306 40v24M320 40v24M334 40v24M348 40v24M362 40v24M376 40v24M390 40v24M404 40v24M418 40v24M432 40v24M446 40v24M460 40v24M474 40v24M488 40v24M530 40v24M544 40v24M558 40v24M572 40v24M586 40v24M600 40v24M614 40v24M628 40v24M642 40v24M656 40v24M670 40v24M684 40v24M698 40v24M712 40v24M726 40v24" stroke="#b0b0ae"/>
          <path d="M193 20h42v44h-42z" fill="#cdcdcd"/><path d="M193 39h42v25h-42z" fill="#a3a3a3"/><path d="M199 64h32v18h-32z" fill="#bcbcba"/>
          <path d="M231 65h382v17H231z" fill="#5d9138"/><path d="M506 65h13v17h-28v-4h15z" fill="#b5b5b2"/><path d="M478 71l14 4M528 75l14-4 8-6" stroke="#45503c" stroke-width="4" stroke-dasharray="3 1.500" fill="none"/>
          <path d="M176 62q-14 6-13 20h12z" fill="#999" opacity=".6"/>
          <g filter="url(#leaf)"><path d="M168 82q-3-8 3-13l2-6 6-1 4-5 5 4 6 1 3 6q5 6 2 14zM230 82q-3-10 3-15l1-6 7-2 5-6 5 6 7 1 2 6q6 7 3 16zM326 82q-3-10 3-14l2-7 7-1 4-6 5 5 6 2 3 6q5 6 2 15zM358 82q-2-9 3-14l2-7 6-1 5-6 5 6 6 1 2 6q5 6 3 15zM449 82q-2-10 3-14l2-7 6-1 5-7 5 6 6 2 2 6q5 6 3 15zM545 82q-3-9 3-13l2-7 6-1 5-5 5 5 6 2 3 6q5 6 2 13zM586 82q-2-9 3-14l2-6 5-1 5-6 4 6 6 1 2 6q4 6 2 14z"/><circle cx="312" cy="71" r="4"/><circle cx="401" cy="71" r="4"/></g>
          <path d="M268 82q-3-8 3-13l4-6 7-4 7 2 6 4 5 7-1 10zM410 82q-3-8 3-13l4-5 7-4 7 2 6 4 5 7-1 9z" filter="url(#bloom)"/>
          <text x="503" y="49" class="gate" textLength="15" lengthAdjust="spacingAndGlyphs">ACCESO</text><text x="501" y="55" class="gate" textLength="19" lengthAdjust="spacingAndGlyphs">PEATONAL</text><path d="M508 56.500h6l-3 5.500z" fill="#f04e16"/>
          <text x="337" y="30.500" font-family="Inter,sans-serif" font-weight="700" font-size="9" textLength="97">Rojas Magallanes 2457</text>
        </svg>
        <div class="caption"><span data-w="183">EMPLAZAMIENTO</span></div>
      </div>
    </section>

    <div class="floaters">
      <a><svg width="40" height="40"><circle cx="20" cy="20" r="20" fill="#fff"/><path d="M11 7h17q2 0 2 2v19l-6 6H11q-2 0-2-2V9q0-2 2-2z" fill="#c93d2c"/><path d="M24 34v-6h6z" fill="#fff" stroke="#c93d2c"/><text x="14" y="26" font-family="Inter,sans-serif" font-weight="800" font-size="18" fill="#fff">$</text></svg></a>
      <a><svg width="40" height="40"><circle cx="20" cy="20" r="20" fill="#fff"/><path d="M8 32l2-7A12.500 12.500 0 1 1 15 30.500z" fill="#43952f"/><path d="M13 15c1-2.500 3-2 3.500-.5l1 3-1.500 2c1 2.500 2.500 3.500 4.500 4.500l2-1.500 3.500 1.500c.5 2-1.500 3.500-3.500 3.500-5 0-10-6-9.500-12.500z" fill="#fff"/></svg></a>
    </div>
  </main>
  <div class="scrollbar"><b class="up"></b><i></i><b class="down"></b></div>
</div>

<footer class="taskbar">
  <div><svg width="18" height="18"><path d="M0 2.500l7.500-1v7H0zM8.500 1.300L17 0v8.500H8.500zM0 9.500h7.500v7l-7.500-1zM8.500 9.500H17V18l-8.500-1.300z" fill="#fff"/></svg></div>
  <div><svg width="24" height="24"><circle cx="13" cy="9.500" r="7.500" fill="none" stroke="#fff" stroke-width="2"/><path d="M7.500 15L.5 22.500" stroke="#fff" stroke-width="2"/></svg></div>
  <div><svg width="18" height="18"><g fill="none" stroke="#fff" stroke-width="1.200"><path d="M0 0v3h11V0M0 18v-3h11v3M0 5.500h11v7H0zM14.500 1v4M14.500 9v9"/></g><path d="M13 5h3v3h-3z" fill="#fff"/></svg></div>
  <div class="w2"><svg width="24" height="24"><path d="M0 0h24v24H0z" fill="#0a0a08"/><path d="M4 4h16v17H4z" fill="#8a6146"/><path d="M4 4h16v5l-2-1-2 2-3-2-3 2-3-1-3 1z" fill="#5ea233"/><path d="M6 12h2v2H6zM12 11h2v2h-2zM9 15h3v2H9zM15 15h3v2h-3zM6 18h2v2H6z" fill="#64432e"/></svg></div>
  <div><svg width="24" height="24"><rect x="1" y="1" width="22" height="22" rx="4" fill="#001d33"/><text x="5" y="16.500" font-family="Open Sans,sans-serif" font-weight="700" font-size="12" textLength="14" lengthAdjust="spacingAndGlyphs" fill="#31a8ff">Ps</text></svg></div>
  <div><svg width="24" height="24"><path d="M1 3h8l2 2h12v16H1z" fill="#fbd670"/><path d="M1 3h8l2 3H1z" fill="#e8a33a"/><path d="M5 21v-9h14v9h-4v-4H9v4z" fill="#3f93d4"/></svg></div>
  <div><svg width="24" height="24"><circle cx="12" cy="13" r="10.500" fill="#ff5a36"/><path d="M13 0c5 4 10 7 10 14a11 11 0 0 1-11 10c6-2 8-8 5-12-2-2-5-5-4-12z" fill="#ffc22e"/><path d="M3 6l2 2 3-1 2 3a5 5 0 1 0 6 5c-1 6-9 8-13 3q-3-6 0-12z" fill="#fb3b5b"/><circle cx="12.500" cy="13.500" r="4.500" fill="#7a3fd0"/></svg></div>
  <div class="run active"><svg width="28" height="26"><circle cx="13" cy="13" r="12" fill="#34a853"/><path d="M2.600 7A12 12 0 0 1 23.400 7H13l-5 9z" fill="#ea4335"/><path d="M23.400 7A12 12 0 0 1 13 25l5-9-5-9z" fill="#fbc116"/><circle cx="13" cy="13" r="5.600" fill="#fff"/><circle cx="13" cy="13" r="4.400" fill="#4285f4"/><circle cx="19" cy="18" r="7.200" fill="#5a9a3c"/><text x="16" y="22" font-family="Open Sans,sans-serif" font-size="9" fill="#fff">G</text></svg></div>
  <div class="run"><svg width="24" height="24"><g transform="translate(-2)"><path d="M15 1h9v8h-9z" fill="#f5a623"/><path d="M17 3h5v4h-5z" fill="#e2701c"/><path d="M4 7h10l2 2-2 6v8M15 9L3 21" fill="none" stroke="#fcc02e" stroke-width="4"/></g></svg></div>
  <div class="run"><svg width="26" height="26"><circle cx="12" cy="12" r="12" fill="#5865f2"/><path d="M6 9q6-4 12 0l2 7-4 2-1-2H9l-1 2-4-2z" fill="#fff"/><circle cx="18.500" cy="18" r="7.200" fill="#e2565c"/><text x="12.500" y="22" font-family="Open Sans,sans-serif" font-size="10" fill="#fff">9+</text></svg></div>
  <div class="run"><svg class="wa" width="34" height="28"><path d="M2 24l2-6a10.500 10.500 0 1 1 4 4z" fill="none" stroke="#2fd366" stroke-width="2.400"/><path d="M8 8c1-2 3-1 3 1l1 2-1 1.500c1 2 2 3 4 4l2-1 2 1c1 2-2 3-3 3-4 0-9-6-8-11z" fill="#2fd366"/><circle cx="25" cy="19.500" r="7.700" fill="#6b2414" stroke="#c79a8c"/><text x="22" y="24" font-family="Open Sans,sans-serif" font-weight="600" font-size="11" fill="#fff">8</text></svg></div>
  <div class="tray"><svg width="18" height="18"><path d="M5 8c-3-1-5 3-3 5s4 1 6-2l6-10c2 1 1 4-1 7l-4 6c-2 2-3 0-2-2l4-6M12 11c2-2 4-1 4 0s-2 2-3 1" fill="none" stroke="#fff" stroke-width="1.300"/></svg><div class="clock"><span data-w="27">11:59</span><span data-w="58">23-08-2024</span></div></div>
</footer>
<script src="fit.js"></script>
</body>
</html>
```
FILE: styles.css
```css
* { box-sizing: border-box; }
body { margin: 0; width: 1919px; height: 1079px; overflow: hidden; display: flex; flex-direction: column; font-family: "Open Sans", "Noto Sans", sans-serif; font-size: 12px; color: #2a1f22; }
svg { flex: none; display: block; }
.defs { position: absolute; }
[data-w] { display: inline-block; white-space: nowrap; transform-origin: 0 50%; }

.tabstrip { height: 40px; flex: none; display: flex; gap: 6px; padding: 6px 12px 0 6px; background: repeating-linear-gradient(60deg, rgba(255,255,255,.04) 0 1px, transparent 1px 3px), linear-gradient(#4e4e4e, #242424); }
.tab-search { width: 28px; height: 28px; border-radius: 9px; background: #ffc6d2; display: flex; align-items: center; justify-content: center; }
.tab { position: relative; width: 232px; height: 28px; border-radius: 10px; background: #ffeeef; display: flex; align-items: center; gap: 8px; padding: 0 12px 0 8px; color: #1f181a; }
.tab .x { margin-left: auto; }
.tab:not(.last):not(.active)::after { content: ""; position: absolute; right: -4px; top: 6px; width: 2px; height: 16px; background: #f9a6b3; }
.tab.active { height: 34px; padding-bottom: 6px; border-radius: 10px 10px 0 0; background: #ff98a9; }
.tab.active::before, .tab.active::after { content: ""; position: absolute; bottom: 0; width: 8px; height: 8px; }
.tab.active::before { left: -8px; background: radial-gradient(circle at 0 0, transparent 7.5px, #ff98a9 8px); }
.tab.active::after { right: -8px; background: radial-gradient(circle at 100% 0, transparent 7.5px, #ff98a9 8px); }
.fade { -webkit-mask-image: linear-gradient(90deg, #000 84%, rgba(0,0,0,.1)); mask-image: linear-gradient(90deg, #000 84%, rgba(0,0,0,.1)); }
.newtab { width: 28px; height: 28px; border-radius: 14px; background: #ffeeef; display: flex; align-items: center; justify-content: center; }
.winbtns { margin-left: auto; display: flex; gap: 35px; padding: 9px 5px 0 0; }

.toolbar { height: 44px; flex: none; background: #ff98a9; display: flex; align-items: center; padding: 2px 19px 0 15px; }
.navbtns { display: flex; gap: 22px; width: 105px; }
.omnibox { width: 1554px; height: 34px; border-radius: 17px; background: #ffeef1; display: flex; align-items: center; padding: 0 16px 0 5px; }
.site { width: 24px; height: 24px; border-radius: 50%; background: #ffc6d1; display: flex; align-items: center; justify-content: center; margin-right: 8px; }
.url { font-size: 14px; color: #7b6d72; margin-bottom: 2px; }
.url b { font-weight: 400; color: #251c1f; }
.star { margin-left: auto; }
.exts { flex: 1; display: flex; align-items: center; justify-content: space-between; padding-left: 17px; }
.vsep { width: 2px; height: 17px; background: #ffe3e8; }
.avatar { width: 34px; height: 34px; border-radius: 50%; background: #ffc6d2; display: flex; align-items: center; justify-content: center; }
.avatar span { width: 20px; height: 20px; line-height: 20px; border-radius: 50%; background: #5b9b34; color: #fff; text-align: center; font-size: 11px; }

.bookmarks { height: 37px; flex: none; background: #ff98a9; display: grid; grid-template-columns: 154px 92px 110px 154px 154px 154px 72px 154px 86px 72px 76px 154px 154px 124px 27px 18px auto; align-items: center; padding: 0 0 5px 12px; }
.bookmarks > div { display: flex; gap: 6px; align-items: center; }
.bookmarks span { margin-bottom: 2px; }
.ud { margin-left: 4px; }
.all { margin-left: 2px; }

.viewport { flex: 1; min-height: 0; display: flex; }
.page { position: relative; width: 1903px; overflow: hidden; background: #fefefe; font-family: Inter, "Liberation Sans", sans-serif; }
.site-header { height: 94px; background: #e04e10; display: flex; align-items: flex-start; padding: 18px 0 0 28px; }
.logo { width: 330px; }
nav { margin-left: 328px; height: 22px; margin-top: 35px; display: flex; align-items: center; font: 800 20.5px/22px "Open Sans", sans-serif; color: #fff; }
nav i { width: 2px; height: 17px; margin: 2px 11.600px 0; background: #fff; }
nav i.wide { margin-left: 14px; margin-right: 12px; }
nav .lens { margin: -3px 0 0 8px; }
nav .mail { margin: -3px 0 0 10px; }

.intro { height: 162px; display: flex; padding: 0 0 0 397px; }
.intro p { margin: 4px 0 0; width: 935px; font-size: 15.5px; line-height: 23.2px; color: #222; }
.intro p span { display: table; }
.where { color: #f05a22; font-size: 14.5px; line-height: 20px; }
.where svg { margin-left: 25px; }
.where a { margin-top: -2px; }

.banner { margin: 0; width: 793px; height: 60px; padding-left: 315px; line-height: 60px; background: #e04e10; color: #fff; font-size: 18.5px; font-weight: 800; }
.floors { display: flex; gap: 17px; margin: 30px 0 0 624px; color: #fff; font-size: 16px; font-weight: 700; }
.floors a { width: 214px; height: 45px; line-height: 40px; background: #e04e10; text-align: center; border: 1px solid #e04e10; }
.floors .on { background: #fff; color: #e04e10; border-color: #c0532c; font-weight: 600; }
.floors .f2 { width: 158px; }
.floors .f3 { width: 247px; }
.dots { display: flex; gap: 5px; margin: 31px 0 0 952px; }
.dots i { width: 15px; height: 15px; border-radius: 50%; border: 1px solid #d8531f; }
.dots .on { background: #e04e10; }

.carousel { display: flex; margin: 22px 0 50px 290px; height: 328px; }
.prev { margin: 111px 42px 0 0; }
.next { margin: 107px 0 0 11px; }
.card { width: 360px; margin-right: 30px; }
.plan { margin-bottom: 6px; }
.lbl { font: 11px "Liberation Sans", sans-serif; fill: #1c1a1a; }
.specs { height: 41px; border: 1px solid #c4c4c4; border-bottom-width: 2px; background: #ededed; display: flex; align-items: flex-start; padding: 5px 0 0 5px; color: #444; font-size: 14px; }
.specs span { margin: 4px 0 0 5px; line-height: 18px; height: 18px; }
.specs i { width: 2px; height: 13px; margin: 9px 5px 0 65px; background: #ccc; }
.specs i ~ i { margin-left: 58px; margin-right: 5px; }
.specs sup { font-size: 10px; line-height: 0; vertical-align: 5px; }
.info { height: 71px; border: 1px solid #c4c4c4; border-top: 0; background: #fff; display: flex; justify-content: space-between; padding: 10px 22px 0 15px; }
.info p { margin: 0; font-size: 14.500px; line-height: 20px; color: #8a8a8a; }
.info b { font-weight: 700; color: #e04e10; }
.btn { position: relative; width: 100px; height: 34px; line-height: 34px; background: #e04e10; color: #fff; text-align: center; font-family: "Open Sans", sans-serif; font-weight: 800; font-size: 13.500px; }
.focus { box-shadow: inset 0 0 0 1px #d2603a, inset 0 0 0 2px #fff; }
.focus::before { content: ""; position: absolute; inset: 2px; border: 2px solid #101010; border-radius: 4px; }

.gallery { display: flex; height: 82px; background: #e04e10; padding-left: 384px; overflow: hidden; }
.menu { width: 258px; margin-right: 17px; padding-top: 2px; text-align: center; color: #fff; }
.menu h3 { margin: 0 0 3px; height: 53px; line-height: 52px; font-size: 19.500px; font-weight: 800; background: #c8440d; border-radius: 4px 4px 0 0; }
.menu a { display: block; height: 53px; background: #c8440d; border-radius: 4px 4px 0 0; font: 700 16px/50px "Open Sans", sans-serif; }
.stage { position: relative; width: 878px; height: 82px; background: #fff; }
.caption { position: absolute; left: 0; top: 0; width: 878px; height: 50px; padding-left: 30px; border-left: 3px solid #ff5a0a; background: rgba(0,0,0,.5); color: #fff; font-size: 20px; line-height: 48px; text-shadow: 1px 2px 2px rgba(0,0,0,.5); }
.gate { font: 5.500px "Liberation Sans", sans-serif; }

.floaters { position: absolute; right: 0; top: 366px; }
.floaters a { display: block; width: 50px; height: 47px; margin-bottom: 1px; padding: 4px 0 0 4px; border-radius: 23px 0 0 23px; background: #343434; }
.floaters a + a { padding-top: 3px; }

.scrollbar { width: 16px; background: #f1f1f1; display: flex; flex-direction: column; align-items: center; }
.scrollbar i { width: 13px; height: 210px; margin-top: 305px; margin-left: 1px; background: #c1c1c1; }
.scrollbar b { border: 4px solid transparent; }
.scrollbar .up { margin-top: 4px; border-bottom-color: #444; }
.scrollbar .down { margin-top: auto; margin-bottom: 3px; border-top-color: #444; }

.taskbar { height: 39px; flex: none; display: flex; background: linear-gradient(90deg, #38160c, #3c1510 25%, #3c1510 66%, #35150c 80%); }
.taskbar > div { width: 49px; display: flex; align-items: center; justify-content: center; }
.taskbar > div:nth-child(2), .taskbar > div:nth-child(3) { width: 48px; }
.taskbar > .w2 { width: 51px; }
.taskbar > .run { border-bottom: 2px solid transparent; background: linear-gradient(#f4c4b4, #f4c4b4) 50% 100%/40px 2px no-repeat; background-origin: border-box; }
.taskbar > .active { background: #80341f; border-color: #f4c4b4; }
.wa { margin-left: 6px; }
.taskbar > .tray { width: auto; margin-left: auto; padding-right: 5px; gap: 13px; color: #fff; }
.clock { display: flex; flex-direction: column; align-items: center; line-height: 18px; }
```
FILE: fit.js
```js
document.querySelectorAll('[data-w]').forEach(function (el) {
  var target = Number(el.dataset.w);
  var natural = el.getBoundingClientRect().width;
  el.style.transform = 'scaleX(' + target / natural + ')';
  el.style.marginRight = (target - natural) + 'px';
});
```
